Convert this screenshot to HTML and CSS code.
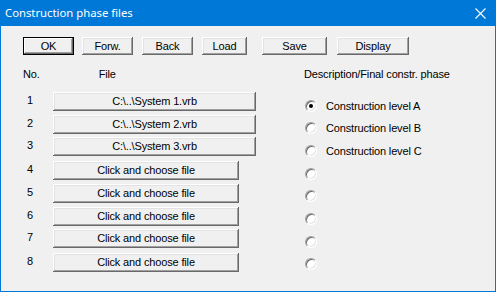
FILE: index.html
```html
<!DOCTYPE html>
<html>
<head>
<meta charset="utf-8">
<link rel="stylesheet" href="styles.css">
</head>
<body>
<div class="window">
  <div class="titlebar">
    <span class="title">Construction phase files</span>
    <svg class="close" width="11" height="11" viewBox="0 0 11 11"><path d="M0.5 0.5 L10.5 10.5 M10.5 0.5 L0.5 10.5" stroke="#fff" stroke-width="1.1" fill="none"/></svg>
  </div>
  <div class="client">
    <div class="toolbar">
      <button class="btn default b-ok">OK</button>
      <button class="btn b-forw">Forw.</button>
      <button class="btn b-back">Back</button>
      <button class="btn b-load">Load</button>
      <button class="btn b-save">Save</button>
      <button class="btn b-display">Display</button>
    </div>
    <div class="main">
      <div class="files">
        <div class="head"><span class="h-no">No.</span><span class="h-file">File</span></div>
        <div class="rows">
          <div class="row"><span class="num">1</span><button class="btn fbtn long">C:\..\System 1.vrb</button></div>
          <div class="row"><span class="num">2</span><button class="btn fbtn long">C:\..\System 2.vrb</button></div>
          <div class="row tight"><span class="num">3</span><button class="btn fbtn long">C:\..\System 3.vrb</button></div>
          <div class="row"><span class="num">4</span><button class="btn fbtn">Click and choose file</button></div>
          <div class="row"><span class="num">5</span><button class="btn fbtn">Click and choose file</button></div>
          <div class="row"><span class="num">6</span><button class="btn fbtn">Click and choose file</button></div>
          <div class="row tight"><span class="num">7</span><button class="btn fbtn">Click and choose file</button></div>
          <div class="row"><span class="num">8</span><button class="btn fbtn">Click and choose file</button></div>
        </div>
      </div>
      <div class="phases">
        <div class="head">Description/Final constr. phase</div>
        <div class="radios">
          <div class="opt"><span class="radio checked"></span><span class="lbl">Construction level A</span></div>
          <div class="opt"><span class="radio"></span><span class="lbl">Construction level B</span></div>
          <div class="opt"><span class="radio"></span><span class="lbl">Construction level C</span></div>
          <div class="opt"><span class="radio"></span></div>
          <div class="opt"><span class="radio"></span></div>
          <div class="opt"><span class="radio"></span></div>
          <div class="opt"><span class="radio"></span></div>
          <div class="opt"><span class="radio"></span></div>
        </div>
      </div>
    </div>
  </div>
</div>
</body>
</html>
```
FILE: styles.css
```css
* { box-sizing: border-box; }
html, body { margin: 0; padding: 0; }
body {
  width: 496px;
  height: 292px;
  background: #f0f0f0;
  font-family: "Liberation Sans", Arial, sans-serif;
  font-size: 11px;
  letter-spacing: -0.15px;
  color: #000;
  overflow: hidden;
}
.window {
  width: 496px;
  height: 292px;
  border: 1px solid #0078d7;
  border-top: 0;
  background: #f0f0f0;
  display: flex;
  flex-direction: column;
}
.titlebar {
  height: 26px;
  margin: 0 -1px;
  background: #0078d7;
  display: flex;
  align-items: center;
  justify-content: space-between;
  padding: 0 10px 0 5px;
}
.title {
  color: #fff;
  font-family: "Noto Sans", "Open Sans", sans-serif;
  font-size: 11.3px;
  letter-spacing: 0;
  line-height: 16px;
}
.close { display: block; }
.client {
  padding: 11px 0 0 22px;
}
.toolbar {
  display: flex;
  height: 18px;
}
.btn {
  font-family: "Liberation Sans", Arial, sans-serif;
  font-size: 11px;
  letter-spacing: -0.15px;
  color: #000;
  background: #f0f0f0;
  border: 0;
  margin: 0;
  padding: 0;
  height: 18px;
  box-shadow: inset -1px -1px #696969, inset 1px 1px #ffffff, inset -2px -2px #a0a0a0, inset 2px 2px #e3e3e3;
  line-height: 16px;
  text-align: center;
}
.btn.default {
  border: 1px solid #000;
  box-shadow: inset -1px -1px #696969, inset 1px 1px #ffffff, inset -2px -2px #a0a0a0;
}
.b-ok { width: 51px; }
.b-forw { width: 51px; margin-left: 8px; }
.b-back { width: 51px; margin-left: 9px; }
.b-load { width: 45px; margin-left: 9px; }
.b-save { width: 65px; margin-left: 15px; }
.b-display { width: 72px; margin-left: 10px; }
.main {
  display: flex;
  margin-top: 13px;
}
.files { width: 281px; }
.head {
  height: 13px;
  line-height: 13px;
  white-space: nowrap;
}
.h-file { margin-left: 59px; }
.rows {
  display: grid;
  grid-auto-rows: 19px;
  row-gap: 4px;
  margin-top: 11px;
}
.row {
  display: flex;
  align-items: flex-start;
}
.row.tight { margin-top: -1px; }
.num {
  width: 30px;
  padding-left: 4px;
  line-height: 14px;
  margin-top: 1px;
}
.fbtn {
  width: 186px;
  height: 19px;
  line-height: 17px;
}
.fbtn.long { width: 203px; }
.radios {
  display: grid;
  grid-auto-rows: 22.7px;
  margin-top: 18px;
}
.opt {
  display: flex;
  align-items: center;
  height: 13px;
}
.radio {
  width: 12px;
  height: 12px;
  border-radius: 50%;
  margin-left: 1px;
  background: #fff;
  border: 1px solid;
  border-color: #a0a0a0 #ffffff #ffffff #a0a0a0;
  box-shadow: inset 1px 1px #696969, inset -1px -1px #e3e3e3;
  position: relative;
  flex: none;
}
.radio.checked::after {
  content: "";
  position: absolute;
  left: 3px;
  top: 3px;
  width: 4px;
  height: 4px;
  border-radius: 50%;
  background: #000;
}
.lbl { margin-left: 9px; }
```
